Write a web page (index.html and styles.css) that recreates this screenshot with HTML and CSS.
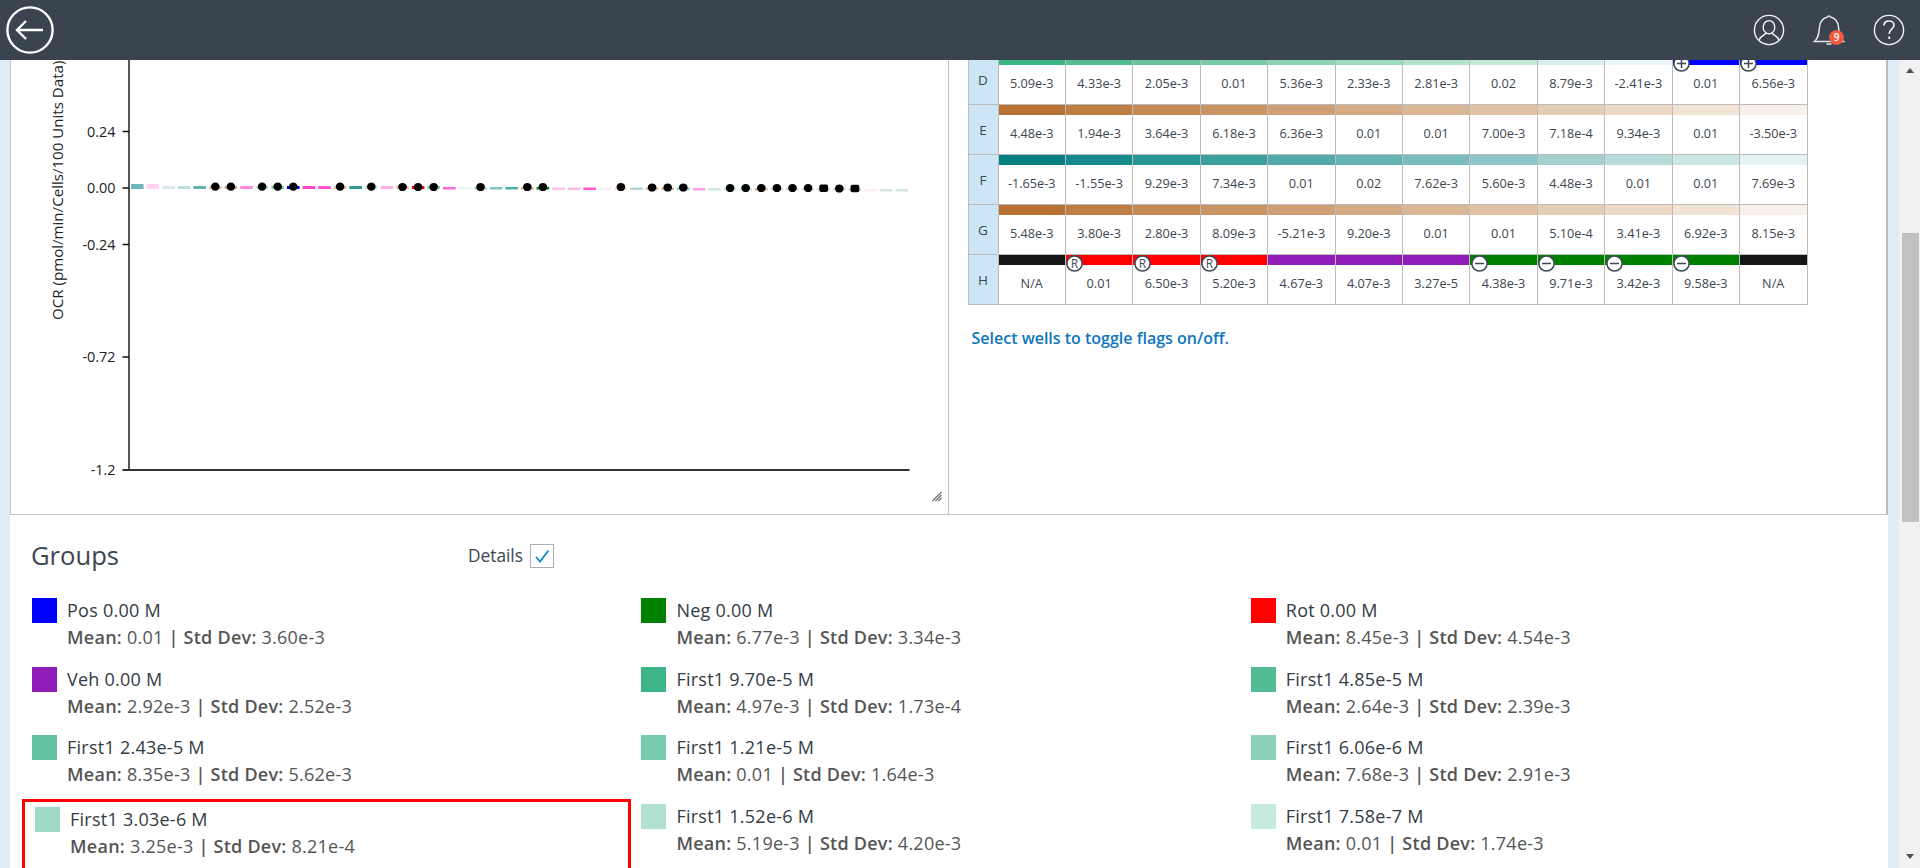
FILE: index.html
```html
<!DOCTYPE html>
<html lang="en">
<head>
<meta charset="utf-8">
<title>Dose response</title>
<link rel="stylesheet" href="styles.css">
</head>
<body>
<header class="topbar">
  <button class="back" aria-label="Back">
    <svg width="48" height="48" viewBox="0 0 48 48"><circle cx="24" cy="24" r="22.6" fill="none" stroke="#fff" stroke-width="2.4"/><path d="M11 24H37M20 15L11 24L20 33" fill="none" stroke="#fff" stroke-width="2.4"/></svg>
  </button>
  <div class="top-icons">
    <svg width="32" height="32" viewBox="0 0 32 32" fill="none" stroke="#f0f1f2" stroke-width="1.4"><circle cx="16" cy="16" r="14.6"/><ellipse cx="16" cy="13.2" rx="5.8" ry="6.6"/><path d="M6 26.5C6.500 22 11 22 13.200 19M26 26.500C25.500 22 21 22 18.800 19"/></svg>
    <div class="bell">
      <svg width="32" height="32" viewBox="0 0 32 32" fill="none" stroke="#e4e6e8" stroke-width="1.5"><path d="M1.500 27.500C5.500 24 6 19 6.500 13C7 7 11 4 14.500 3C15 1.500 17 1.500 17.500 3C21 4 25 7 25.500 13C26 19 26.500 24 30.500 27.500Z"/><path d="M13.500 30H18.500"/></svg>
      <span class="badge">9</span>
    </div>
    <svg width="32" height="32" viewBox="0 0 32 32" fill="none" stroke="#f0f1f2" stroke-width="1.4"><circle cx="16" cy="16" r="14.6"/><path d="M11 11.500C11 8.500 13.200 7 16 7C18.800 7 21 8.800 21 11.300C21 15 16.200 15 16.200 20" stroke-width="1.700"/><path d="M16.200 22.500V25" stroke-width="1.900"/></svg>
  </div>
</header>

<div class="layout">
  <main class="page">
    <section class="analysis">
      <div class="chart-pane">
        <svg class="chart" width="937" height="453" viewBox="0.5 0 937 453">
          <text class="axis-title" transform="translate(52 260) rotate(-90)">OCR (pmol/min/Cells/100 Units Data)</text>
          <path class="axis" d="M118.500 0V410M112 71.500H118M112 128H118M112 184.500H118M112 297H118"/>
          <path class="x-axis" d="M112 410H899"/>
          <g class="tick-labels">
            <text x="105" y="76.500">0.24</text>
            <text x="105" y="133">0.00</text>
            <text x="105" y="189.500">-0.24</text>
            <text x="105" y="302">-0.72</text>
            <text x="105" y="415">-1.2</text>
          </g>
          <g>
            <rect x="120.500" y="124" width="12.600" height="5" fill="#6db8b8"/>
            <rect x="136.100" y="124" width="12.600" height="5" fill="#fdd5f0"/>
            <rect x="151.700" y="126" width="12.600" height="3" fill="#d3e9e9"/>
            <rect x="167.300" y="126" width="12.600" height="3" fill="#c0e0e0"/>
            <rect x="182.900" y="126" width="12.600" height="3" fill="#5fb0ae"/>
            <rect x="198.500" y="126" width="12.600" height="3" fill="#e6c7a8"/>
            <rect x="214.100" y="126" width="12.600" height="3" fill="#dcb48c"/>
            <rect x="229.700" y="126" width="12.600" height="3" fill="#ff88d8"/>
            <rect x="245.300" y="126" width="12.600" height="3" fill="#bfe8da"/>
            <rect x="260.900" y="126" width="12.600" height="3" fill="#7dd0b2"/>
            <rect x="276.500" y="126" width="12.600" height="3" fill="#0000ff"/>
            <rect x="292.100" y="126" width="12.600" height="3" fill="#ff44cc"/>
            <rect x="307.700" y="126" width="12.600" height="3" fill="#ff55cf"/>
            <rect x="323.300" y="126" width="12.600" height="3" fill="#e6c7a8"/>
            <rect x="338.900" y="126" width="12.600" height="3" fill="#2e9a98"/>
            <rect x="354.500" y="126" width="12.600" height="3" fill="#cfe8e6"/>
            <rect x="370.100" y="126" width="12.600" height="3" fill="#ffb0e8"/>
            <rect x="385.700" y="126" width="12.600" height="3" fill="#e6c7a8"/>
            <rect x="401.300" y="126" width="12.600" height="3" fill="#ff0000"/>
            <rect x="416.900" y="126" width="12.600" height="3" fill="#7dd0b2"/>
            <rect x="432.500" y="127" width="12.600" height="2.500" fill="#ff66d6"/>
            <rect x="448.100" y="127" width="12.600" height="2.500" fill="#eaf4f4"/>
            <rect x="463.700" y="127" width="12.600" height="2.500" fill="#9fdac4"/>
            <rect x="479.300" y="127" width="12.600" height="2.500" fill="#7fc4c0"/>
            <rect x="494.900" y="127" width="12.600" height="2.500" fill="#50adaa"/>
            <rect x="510.500" y="127" width="12.600" height="2.500" fill="#dcb48c"/>
            <rect x="526.100" y="127" width="12.600" height="2.500" fill="#008000"/>
            <rect x="541.700" y="127.500" width="12.600" height="2.500" fill="#ffc0ec"/>
            <rect x="557.300" y="127.500" width="12.600" height="2.500" fill="#ffb8ea"/>
            <rect x="572.900" y="127.500" width="12.600" height="2.500" fill="#ff55d0"/>
            <rect x="588.500" y="127.500" width="12.600" height="2.500" fill="#ffe8f8"/>
            <rect x="604.100" y="127.500" width="12.600" height="2.500" fill="#f0dcc8"/>
            <rect x="619.700" y="127.500" width="12.600" height="2.500" fill="#b0d8d8"/>
            <rect x="635.300" y="127.500" width="12.600" height="2.500" fill="#dcb48c"/>
            <rect x="650.900" y="127.500" width="12.600" height="2.500" fill="#dcb48c"/>
            <rect x="666.500" y="127.500" width="12.600" height="2.500" fill="#7dd0b2"/>
            <rect x="682.100" y="128" width="12.600" height="2.500" fill="#ff9fe0"/>
            <rect x="697.700" y="128" width="12.600" height="2.500" fill="#cfe8e6"/>
            <rect x="713.300" y="128" width="12.600" height="2.500" fill="#cfe8e6"/>
            <rect x="728.900" y="128" width="12.600" height="2.500" fill="#cfe8e6"/>
            <rect x="744.500" y="128" width="12.600" height="2.500" fill="#dcb48c"/>
            <rect x="760.100" y="128" width="12.600" height="2.500" fill="#e0d0e8"/>
            <rect x="775.700" y="128" width="12.600" height="2.500" fill="#e0d0e8"/>
            <rect x="791.300" y="128" width="12.600" height="2.500" fill="#cfe8e6"/>
            <rect x="806.900" y="128" width="12.600" height="2.500" fill="#e0d0e8"/>
            <rect x="822.500" y="128" width="12.600" height="2.500" fill="#e0d0e8"/>
            <rect x="838.100" y="128" width="12.600" height="2.500" fill="#e0d0e8"/>
            <rect x="853.700" y="129" width="12.600" height="2.500" fill="#ffeefa"/>
            <rect x="869.300" y="129" width="12.600" height="2.500" fill="#cfe8e6"/>
            <rect x="884.900" y="129" width="12.600" height="2.500" fill="#cfe8e6"/>
          </g>
          <g class="dots">
            <ellipse cx="204.800" cy="126.700" rx="4.300" ry="4.100"/>
            <ellipse cx="220.400" cy="126.700" rx="4.300" ry="4.100"/>
            <ellipse cx="251.600" cy="126.700" rx="4.300" ry="4.100"/>
            <ellipse cx="267.200" cy="126.700" rx="4.300" ry="4.100"/>
            <ellipse cx="282.800" cy="126.700" rx="4.300" ry="4.100"/>
            <ellipse cx="329.600" cy="126.700" rx="4.300" ry="4.100"/>
            <ellipse cx="360.800" cy="126.700" rx="4.300" ry="4.100"/>
            <ellipse cx="392" cy="127" rx="4.300" ry="4.100"/>
            <ellipse cx="407.600" cy="127" rx="4.300" ry="4.100"/>
            <ellipse cx="423.200" cy="127" rx="4.300" ry="4.100"/>
            <ellipse cx="470" cy="127" rx="4.300" ry="4.100"/>
            <ellipse cx="516.800" cy="127" rx="4.300" ry="4.100"/>
            <ellipse cx="532.400" cy="127" rx="4.300" ry="4.100"/>
            <ellipse cx="610.400" cy="127" rx="4.300" ry="4.100"/>
            <ellipse cx="641.600" cy="127.500" rx="4.300" ry="4.100"/>
            <ellipse cx="657.200" cy="127.500" rx="4.300" ry="4.100"/>
            <ellipse cx="672.800" cy="127.500" rx="4.300" ry="4.100"/>
            <ellipse cx="719.600" cy="128" rx="4.300" ry="4.100"/>
            <ellipse cx="735.200" cy="128" rx="4.300" ry="4.100"/>
            <ellipse cx="750.800" cy="128" rx="4.300" ry="4.100"/>
            <ellipse cx="766.400" cy="128" rx="4.300" ry="4.100"/>
            <ellipse cx="782" cy="128" rx="4.300" ry="4.100"/>
            <ellipse cx="797.600" cy="128" rx="4.300" ry="4.100"/>
            <rect x="808.800" y="124.500" width="8.800" height="7.500" rx="2"/>
            <ellipse cx="828.800" cy="128.500" rx="4.300" ry="4.100"/>
            <rect x="840" y="124.800" width="8.800" height="7.500" rx="2"/>
          </g>
          <path class="grip" d="M922 441L931 432M925 441L931 435M928 441L931 438"/>
        </svg>
      </div>
      <div class="plate-pane">
        <table class="plate">
          <tbody>
            <tr class="row-d">
              <th>D</th>
              <td><div class="bar mint"></div><div class="val">5.09e-3</div></td>
              <td><div class="bar mint"></div><div class="val">4.33e-3</div></td>
              <td><div class="bar mint"></div><div class="val">2.05e-3</div></td>
              <td><div class="bar mint"></div><div class="val">0.01</div></td>
              <td><div class="bar mint"></div><div class="val">5.36e-3</div></td>
              <td><div class="bar mint"></div><div class="val">2.33e-3</div></td>
              <td><div class="bar mint"></div><div class="val">2.81e-3</div></td>
              <td><div class="bar mint"></div><div class="val">0.02</div></td>
              <td><div class="bar mint"></div><div class="val">8.79e-3</div></td>
              <td><div class="bar mint"></div><div class="val">-2.41e-3</div></td>
              <td><div class="bar blue"></div><svg class="flag" width="17" height="17" viewBox="0 0 17 17"><circle cx="8.500" cy="8.500" r="7.600"/><path d="M4 8.500H13M8.500 4V13"/></svg><div class="val">0.01</div></td>
              <td><div class="bar blue"></div><svg class="flag" width="17" height="17" viewBox="0 0 17 17"><circle cx="8.500" cy="8.500" r="7.600"/><path d="M4 8.500H13M8.500 4V13"/></svg><div class="val">6.56e-3</div></td>
            </tr>
            <tr class="row-e">
              <th>E</th>
              <td><div class="bar copper"></div><div class="val">4.48e-3</div></td>
              <td><div class="bar copper"></div><div class="val">1.94e-3</div></td>
              <td><div class="bar copper"></div><div class="val">3.64e-3</div></td>
              <td><div class="bar copper"></div><div class="val">6.18e-3</div></td>
              <td><div class="bar copper"></div><div class="val">6.36e-3</div></td>
              <td><div class="bar copper"></div><div class="val">0.01</div></td>
              <td><div class="bar copper"></div><div class="val">0.01</div></td>
              <td><div class="bar copper"></div><div class="val">7.00e-3</div></td>
              <td><div class="bar copper"></div><div class="val">7.18e-4</div></td>
              <td><div class="bar copper"></div><div class="val">9.34e-3</div></td>
              <td><div class="bar copper"></div><div class="val">0.01</div></td>
              <td><div class="bar copper"></div><div class="val">-3.50e-3</div></td>
            </tr>
            <tr class="row-f">
              <th>F</th>
              <td><div class="bar teal"></div><div class="val">-1.65e-3</div></td>
              <td><div class="bar teal"></div><div class="val">-1.55e-3</div></td>
              <td><div class="bar teal"></div><div class="val">9.29e-3</div></td>
              <td><div class="bar teal"></div><div class="val">7.34e-3</div></td>
              <td><div class="bar teal"></div><div class="val">0.01</div></td>
              <td><div class="bar teal"></div><div class="val">0.02</div></td>
              <td><div class="bar teal"></div><div class="val">7.62e-3</div></td>
              <td><div class="bar teal"></div><div class="val">5.60e-3</div></td>
              <td><div class="bar teal"></div><div class="val">4.48e-3</div></td>
              <td><div class="bar teal"></div><div class="val">0.01</div></td>
              <td><div class="bar teal"></div><div class="val">0.01</div></td>
              <td><div class="bar teal"></div><div class="val">7.69e-3</div></td>
            </tr>
            <tr class="row-g">
              <th>G</th>
              <td><div class="bar copper"></div><div class="val">5.48e-3</div></td>
              <td><div class="bar copper"></div><div class="val">3.80e-3</div></td>
              <td><div class="bar copper"></div><div class="val">2.80e-3</div></td>
              <td><div class="bar copper"></div><div class="val">8.09e-3</div></td>
              <td><div class="bar copper"></div><div class="val">-5.21e-3</div></td>
              <td><div class="bar copper"></div><div class="val">9.20e-3</div></td>
              <td><div class="bar copper"></div><div class="val">0.01</div></td>
              <td><div class="bar copper"></div><div class="val">0.01</div></td>
              <td><div class="bar copper"></div><div class="val">5.10e-4</div></td>
              <td><div class="bar copper"></div><div class="val">3.41e-3</div></td>
              <td><div class="bar copper"></div><div class="val">6.92e-3</div></td>
              <td><div class="bar copper"></div><div class="val">8.15e-3</div></td>
            </tr>
            <tr class="row-h">
              <th>H</th>
              <td><div class="bar black"></div><div class="val">N/A</div></td>
              <td><div class="bar red"></div><svg class="flag" width="17" height="17" viewBox="0 0 17 17"><circle cx="8.500" cy="8.500" r="7.600"/><text x="8.500" y="12.700" text-anchor="middle">R</text></svg><div class="val">0.01</div></td>
              <td><div class="bar red"></div><svg class="flag" width="17" height="17" viewBox="0 0 17 17"><circle cx="8.500" cy="8.500" r="7.600"/><text x="8.500" y="12.700" text-anchor="middle">R</text></svg><div class="val">6.50e-3</div></td>
              <td><div class="bar red"></div><svg class="flag" width="17" height="17" viewBox="0 0 17 17"><circle cx="8.500" cy="8.500" r="7.600"/><text x="8.500" y="12.700" text-anchor="middle">R</text></svg><div class="val">5.20e-3</div></td>
              <td><div class="bar purple"></div><div class="val">4.67e-3</div></td>
              <td><div class="bar purple"></div><div class="val">4.07e-3</div></td>
              <td><div class="bar purple"></div><div class="val">3.27e-5</div></td>
              <td><div class="bar green"></div><svg class="flag" width="17" height="17" viewBox="0 0 17 17"><circle cx="8.500" cy="8.500" r="7.600"/><path d="M4 8.500H13"/></svg><div class="val">4.38e-3</div></td>
              <td><div class="bar green"></div><svg class="flag" width="17" height="17" viewBox="0 0 17 17"><circle cx="8.500" cy="8.500" r="7.600"/><path d="M4 8.500H13"/></svg><div class="val">9.71e-3</div></td>
              <td><div class="bar green"></div><svg class="flag" width="17" height="17" viewBox="0 0 17 17"><circle cx="8.500" cy="8.500" r="7.600"/><path d="M4 8.500H13"/></svg><div class="val">3.42e-3</div></td>
              <td><div class="bar green"></div><svg class="flag" width="17" height="17" viewBox="0 0 17 17"><circle cx="8.500" cy="8.500" r="7.600"/><path d="M4 8.500H13"/></svg><div class="val">9.58e-3</div></td>
              <td><div class="bar black"></div><div class="val">N/A</div></td>
            </tr>
          </tbody>
        </table>
        <p class="hint">Select wells to toggle flags on/off.</p>
      </div>
    </section>

    <section class="groups">
      <div class="groups-head">
        <h2>Groups</h2>
        <label class="details">Details
          <span class="check"><svg width="18" height="18" viewBox="0 0 18 18"><path d="M3 10L7 14.500L15.500 3.500" fill="none" stroke="#0f8ad8" stroke-width="1.800"/></svg></span>
        </label>
      </div>
      <div class="group-grid">
        <div class="group"><span class="swatch blue"></span><div><div class="name">Pos 0.00 M</div><div class="stats"><b>Mean:</b> 0.01 <b>|</b> <b>Std Dev:</b> 3.60e-3</div></div></div>
        <div class="group"><span class="swatch green"></span><div><div class="name">Neg 0.00 M</div><div class="stats"><b>Mean:</b> 6.77e-3 <b>|</b> <b>Std Dev:</b> 3.34e-3</div></div></div>
        <div class="group"><span class="swatch red"></span><div><div class="name">Rot 0.00 M</div><div class="stats"><b>Mean:</b> 8.45e-3 <b>|</b> <b>Std Dev:</b> 4.54e-3</div></div></div>
        <div class="group"><span class="swatch purple"></span><div><div class="name">Veh 0.00 M</div><div class="stats"><b>Mean:</b> 2.92e-3 <b>|</b> <b>Std Dev:</b> 2.52e-3</div></div></div>
        <div class="group"><span class="swatch m1"></span><div><div class="name">First1 9.70e-5 M</div><div class="stats"><b>Mean:</b> 4.97e-3 <b>|</b> <b>Std Dev:</b> 1.73e-4</div></div></div>
        <div class="group"><span class="swatch m2"></span><div><div class="name">First1 4.85e-5 M</div><div class="stats"><b>Mean:</b> 2.64e-3 <b>|</b> <b>Std Dev:</b> 2.39e-3</div></div></div>
        <div class="group"><span class="swatch m3"></span><div><div class="name">First1 2.43e-5 M</div><div class="stats"><b>Mean:</b> 8.35e-3 <b>|</b> <b>Std Dev:</b> 5.62e-3</div></div></div>
        <div class="group"><span class="swatch m4"></span><div><div class="name">First1 1.21e-5 M</div><div class="stats"><b>Mean:</b> 0.01 <b>|</b> <b>Std Dev:</b> 1.64e-3</div></div></div>
        <div class="group"><span class="swatch m5"></span><div><div class="name">First1 6.06e-6 M</div><div class="stats"><b>Mean:</b> 7.68e-3 <b>|</b> <b>Std Dev:</b> 2.91e-3</div></div></div>
        <div class="group selected"><span class="swatch m6"></span><div><div class="name">First1 3.03e-6 M</div><div class="stats"><b>Mean:</b> 3.25e-3 <b>|</b> <b>Std Dev:</b> 8.21e-4</div></div></div>
        <div class="group"><span class="swatch m7"></span><div><div class="name">First1 1.52e-6 M</div><div class="stats"><b>Mean:</b> 5.19e-3 <b>|</b> <b>Std Dev:</b> 4.20e-3</div></div></div>
        <div class="group"><span class="swatch m8"></span><div><div class="name">First1 7.58e-7 M</div><div class="stats"><b>Mean:</b> 0.01 <b>|</b> <b>Std Dev:</b> 1.74e-3</div></div></div>
      </div>
    </section>
  </main>
  <aside class="scrollbar">
    <span class="arrow up"></span>
    <span class="thumb"></span>
    <span class="arrow down"></span>
  </aside>
</div>
</body>
</html>
```

FILE: styles.css
```css
* { box-sizing: border-box; }
html, body { height: 100%; overflow: hidden; }
body {
  margin: 0;
  font-family: "Open Sans", sans-serif;
  color: #3c4650;
  background: #fff;
  display: flex;
  flex-direction: column;
}

/* top bar */
.topbar {
  position: relative;
  z-index: 2;
  flex: none;
  height: 60px;
  background: #39444f;
  display: flex;
  align-items: center;
  justify-content: space-between;
  padding: 0 15px 0 6px;
}
.back { padding: 0; border: 0; background: none; display: block; height: 48px; }
.top-icons { display: flex; gap: 28px; align-items: center; }
.top-icons svg { display: block; }
.bell { position: relative; width: 32px; height: 32px; }
.badge {
  position: absolute;
  left: 16px;
  top: 15.5px;
  width: 15px;
  height: 15px;
  border-radius: 50%;
  background: #ef5a3c;
  color: #fff;
  font-size: 10px;
  font-weight: 600;
  line-height: 15px;
  text-align: center;
}

/* page frame */
.layout { flex: 1; min-height: 0; display: flex; }
.page {
  flex: 1;
  min-width: 0;
  background: #e0edf6;
  padding: 0 11px 0 10px;
  display: flex;
  flex-direction: column;
}
.scrollbar {
  flex: none;
  width: 21px;
  background: #f1f1f1;
  display: flex;
  flex-direction: column;
  align-items: center;
  padding: 8px 0 9px 1px;
}
.thumb { width: 17px; height: 289px; margin-top: 160px; margin-bottom: auto; background: #c1c1c1; }
.arrow { width: 0; height: 0; border-left: 4.5px solid transparent; border-right: 4.5px solid transparent; }
.arrow.up { border-bottom: 5px solid #505050; }
.arrow.down { border-top: 5px solid #505050; }

/* chart + plate */
.analysis {
  flex: none;
  height: 455px;
  display: flex;
  background: #fff;
  border-left: 1.5px solid #c4c4c4;
  border-right: 2px solid #bcbcbc;
  border-bottom: 1.5px solid #c4c4c4;
}
.chart-pane { flex: none; width: 938px; border-right: 1px solid #c4c4c4; overflow: hidden; }
.chart { display: block; }
.axis-title { font-size: 15.1px; fill: #222; }
.axis { fill: none; stroke: #111; stroke-width: 1.4; }
.x-axis { fill: none; stroke: #333; stroke-width: 1.8; }
.tick-labels text { font-size: 14.4px; fill: #222; text-anchor: end; }
.dots { fill: #000; }
.grip { fill: none; stroke: #808080; stroke-width: 1.6; }

.plate-pane { flex: 1; min-width: 0; padding-left: 18.5px; }
.plate {
  width: 840px;
  margin-top: -6px;
  table-layout: fixed;
  border-collapse: collapse;
  font-size: 12.7px;
}
.plate th {
  width: 30px;
  padding: 0;
  border: 1.5px solid #bcbcbc;
  background: #cce6f8;
  font-size: 13.5px;
  font-weight: 400;
  text-align: center;
  vertical-align: middle;
}
.plate td {
  position: relative;
  height: 50px;
  padding: 0;
  border: 1.5px solid #bcbcbc;
  text-align: center;
  vertical-align: top;
}
.bar { height: 10px; }
.val { line-height: 36px; height: 39px; }
.flag { position: absolute; left: 0.5px; top: 0; fill: #fff; stroke: #3f4a56; stroke-width: 1.5; }
.flag text { font-family: "Open Sans", sans-serif; font-size: 12px; fill: #3f4a56; stroke: none; }

.mint { background: #3eb489; }
.copper { background: #b87333; }
.teal { background: #008080; }
.blue { background: #0000ff; }
.red { background: #ff0000; }
.green { background: #008000; }
.purple { background: #901db8; }
.black { background: #161616; }

td:nth-child(3) .copper, td:nth-child(3) .teal { opacity: .92; }
td:nth-child(4) .copper, td:nth-child(4) .teal { opacity: .84; }
td:nth-child(5) .copper, td:nth-child(5) .teal { opacity: .76; }
td:nth-child(6) .copper, td:nth-child(6) .teal { opacity: .68; }
td:nth-child(7) .copper, td:nth-child(7) .teal { opacity: .6; }
td:nth-child(8) .copper, td:nth-child(8) .teal { opacity: .52; }
td:nth-child(9) .copper, td:nth-child(9) .teal { opacity: .44; }
td:nth-child(10) .copper, td:nth-child(10) .teal { opacity: .36; }
td:nth-child(11) .copper, td:nth-child(11) .teal { opacity: .28; }
td:nth-child(12) .copper, td:nth-child(12) .teal { opacity: .2; }
td:nth-child(13) .copper, td:nth-child(13) .teal { opacity: .1; }
td:nth-child(3) .mint { opacity: .9; }
td:nth-child(4) .mint { opacity: .8; }
td:nth-child(5) .mint { opacity: .7; }
td:nth-child(6) .mint { opacity: .6; }
td:nth-child(7) .mint { opacity: .5; }
td:nth-child(8) .mint { opacity: .4; }
td:nth-child(9) .mint { opacity: .3; }
td:nth-child(10) .mint { opacity: .2; }
td:nth-child(11) .mint { opacity: .1; }

.hint { margin: 24px 0 0 4px; font-size: 16px; font-weight: 600; line-height: 18px; color: #0e76bc; }

/* groups */
.groups { flex: 1; min-height: 0; background: #fff; padding-left: 12px; }
.groups-head { height: 78px; display: flex; align-items: center; padding: 3px 0 0 9px; }
.groups-head h2 { width: 437px; margin: 0; font-size: 25.6px; font-weight: 400; line-height: 36px; }
.details { display: flex; align-items: center; gap: 7px; font-size: 17.3px; }
.check { width: 24px; height: 24px; border: 1.5px solid #a8b0b8; display: flex; align-items: center; justify-content: center; }
.group-grid { display: grid; grid-template-columns: repeat(3, 609.4px); grid-auto-rows: 68.67px; }
.group { display: flex; align-items: flex-start; padding: 5px 10px; }
.group.selected { border: 3px solid #f00; height: 90px; }
.swatch { flex: none; width: 25px; height: 25px; margin-right: 10px; }
.name { font-size: 18px; letter-spacing: .25px; line-height: 24px; color: #333b44; }
.stats { margin-top: 3px; font-size: 18px; letter-spacing: .25px; line-height: 24px; color: #555; }
.stats b { font-weight: 600; }
.m1 { background: #3eb489; }
.m2 { background: #52bc95; }
.m3 { background: #66c3a1; }
.m4 { background: #78cbac; }
.m5 { background: #8bd2b8; }
.m6 { background: #9edac4; }
.m7 { background: #b2e1d0; }
.m8 { background: #c5e9dc; }
```
